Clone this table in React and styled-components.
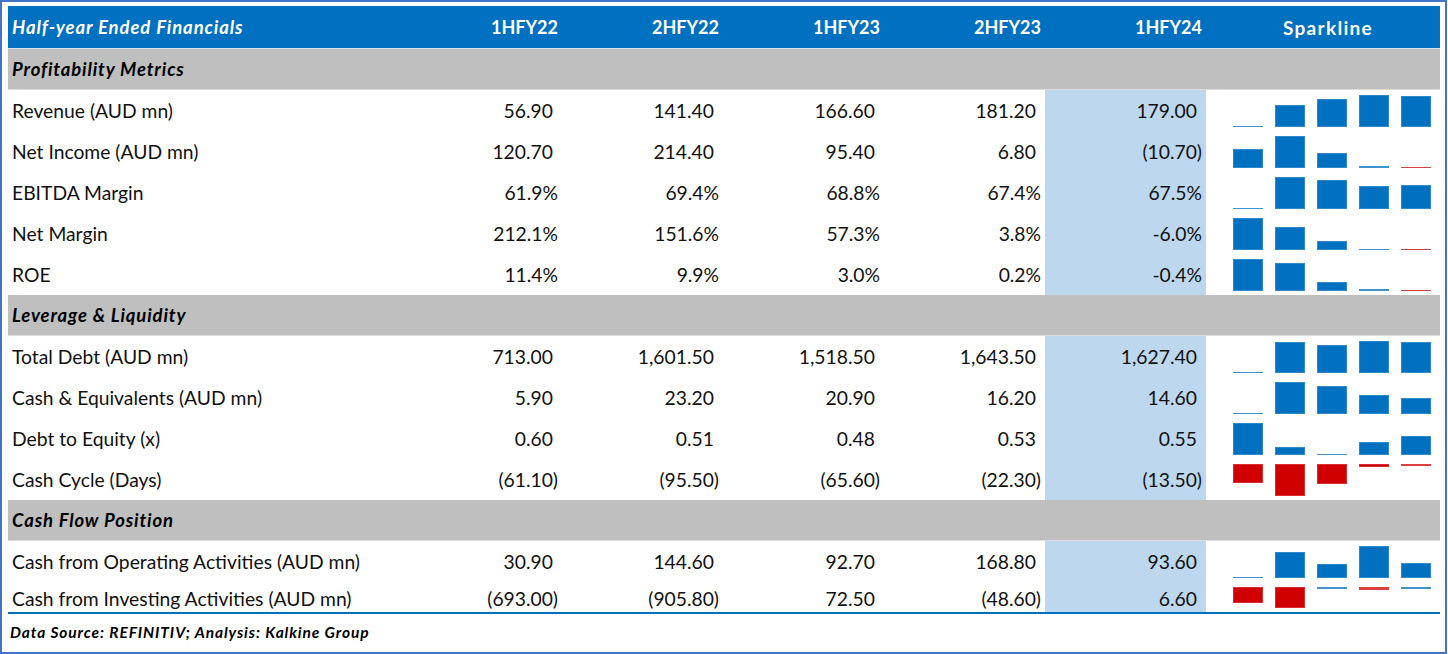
import React from 'react';
import styled, { createGlobalStyle } from 'styled-components';

const GlobalStyle = createGlobalStyle`
  html, body {
    margin: 0;
    padding: 0;
    background: #fff;
  }
  body {
    font-family: Lato, "Open Sans", "Liberation Sans", sans-serif;
    color: #111;
  }
`;

const columns = ['1HFY22', '2HFY22', '1HFY23', '2HFY23', '1HFY24'];

const sections = [
  {
    title: 'Profitability Metrics',
    rows: [
      { label: 'Revenue (AUD mn)', shown: ['56.90', '141.40', '166.60', '181.20', '179.00'], values: [56.9, 141.4, 166.6, 181.2, 179.0] },
      { label: 'Net Income (AUD mn)', shown: ['120.70', '214.40', '95.40', '6.80', '(10.70)'], values: [120.7, 214.4, 95.4, 6.8, -10.7] },
      { label: 'EBITDA Margin', shown: ['61.9%', '69.4%', '68.8%', '67.4%', '67.5%'], values: [61.9, 69.4, 68.8, 67.4, 67.5] },
      { label: 'Net Margin', shown: ['212.1%', '151.6%', '57.3%', '3.8%', '-6.0%'], values: [212.1, 151.6, 57.3, 3.8, -6.0] },
      { label: 'ROE', shown: ['11.4%', '9.9%', '3.0%', '0.2%', '-0.4%'], values: [11.4, 9.9, 3.0, 0.2, -0.4] },
    ],
  },
  {
    title: 'Leverage & Liquidity',
    rows: [
      { label: 'Total Debt (AUD mn)', shown: ['713.00', '1,601.50', '1,518.50', '1,643.50', '1,627.40'], values: [713, 1601.5, 1518.5, 1643.5, 1627.4] },
      { label: 'Cash & Equivalents (AUD mn)', shown: ['5.90', '23.20', '20.90', '16.20', '14.60'], values: [5.9, 23.2, 20.9, 16.2, 14.6] },
      { label: 'Debt to Equity (x)', shown: ['0.60', '0.51', '0.48', '0.53', '0.55'], values: [0.6, 0.51, 0.48, 0.53, 0.55] },
      { label: 'Cash Cycle (Days)', shown: ['(61.10)', '(95.50)', '(65.60)', '(22.30)', '(13.50)'], values: [-61.1, -95.5, -65.6, -22.3, -13.5], down: true },
    ],
  },
  {
    title: 'Cash Flow Position',
    rows: [
      { label: 'Cash from Operating Activities (AUD mn)', shown: ['30.90', '144.60', '92.70', '168.80', '93.60'], values: [30.9, 144.6, 92.7, 168.8, 93.6] },
      { label: 'Cash from Investing Activities (AUD mn)', shown: ['(693.00)', '(905.80)', '72.50', '(48.60)', '6.60'], values: [-693, -905.8, 72.5, -48.6, 6.6], down: true, short: true },
    ],
  },
];

// accounting format: positives keep room for the closing paren
const needsPad = (v) => !v.endsWith('%') && !v.endsWith(')');

const Sparkline = ({ values, down, short }) => {
  const area = short ? 21 : 32;
  const min = Math.min(...values);
  const max = Math.max(...values);
  return (
    <Spark $down={down}>
      {values.map((v, i) => {
        const ratio = down ? (max - v) / (max - min) : (v - min) / (max - min);
        const h = Math.max(1.5, ratio * area);
        return <Bar key={i} $neg={v < 0} $thin={h < 3} style={{ height: h }} />;
      })}
    </Spark>
  );
};

const App = () => {
  return (
    <Frame>
      <GlobalStyle />
      <Table>
        <HeaderRow>
          <HeadCell $left>Half-year Ended Financials</HeadCell>
          {columns.map((c) => (
            <HeadCell key={c}>{c}</HeadCell>
          ))}
          <HeadCell $center>Sparkline</HeadCell>
        </HeaderRow>
        {sections.map((s) => (
          <React.Fragment key={s.title}>
            <SectionRow>{s.title}</SectionRow>
            {s.rows.map((r) => (
              <DataRow key={r.label} $short={r.short}>
                <LabelCell>{r.label}</LabelCell>
                {r.shown.map((v, i) => (
                  <NumCell key={i} $hl={i === 4}>
                    {v}
                    {needsPad(v) && <Ghost>)</Ghost>}
                  </NumCell>
                ))}
                <Sparkline values={r.values} down={r.down} short={r.short} />
              </DataRow>
            ))}
          </React.Fragment>
        ))}
      </Table>
      <Footer>Data Source: REFINITIV; Analysis: Kalkine Group</Footer>
    </Frame>
  );
};

const Frame = styled.div`
  box-sizing: border-box;
  width: 1447px;
  height: 654px;
  border: 2px solid #4472c4;
  padding: 4px 5px 0 6px;
`;

const Table = styled.div`
  width: 1432px;
  border-bottom: 2px solid #0070c0;
`;

const gridCols = '393px repeat(5, 161px) 234px';

const HeaderRow = styled.div`
  display: grid;
  grid-template-columns: ${gridCols};
  height: 42px;
  background: #0070c0;
  color: #fff;
  font-weight: 700;
  font-size: 18px;
  border-bottom: 1px solid #d6e4f0;
`;

const HeadCell = styled.div`
  display: flex;
  align-items: center;
  justify-content: ${(p) => (p.$left ? 'flex-start' : p.$center ? 'center' : 'flex-end')};
  padding: ${(p) => (p.$left ? '0 0 0 4px' : p.$center ? '0 0 0 10px' : '0 4px 0 0')};
  font-style: ${(p) => (p.$left ? 'italic' : 'normal')};
  font-size: ${(p) => (p.$left ? '18.5px' : p.$center ? '19px' : '18px')};
  letter-spacing: ${(p) => (p.$left ? '0.9px' : p.$center ? '1.3px' : '0')};
`;

const SectionRow = styled.div`
  box-sizing: border-box;
  height: 41px;
  display: flex;
  align-items: center;
  padding-left: 4px;
  background: #bfbfbf;
  border-bottom: 1px solid #dcdcdc;
  font-size: 18.5px;
  font-weight: 700;
  font-style: italic;
  letter-spacing: 0.85px;
  color: #000;
`;

const DataRow = styled.div`
  display: grid;
  grid-template-columns: ${gridCols};
  height: ${(p) => (p.$short ? '30px' : '41px')};
  font-size: 19.3px;
  color: #111;
  & > div:not(:last-child) {
    padding-top: ${(p) => (p.$short ? '3px' : '0')};
  }
`;

const LabelCell = styled.div`
  display: flex;
  align-items: center;
  padding-left: 4px;
  white-space: nowrap;
`;

const NumCell = styled.div`
  display: flex;
  align-items: center;
  justify-content: flex-end;
  padding-right: 4px;
  white-space: nowrap;
  background: ${(p) => (p.$hl ? '#bdd7ee' : 'transparent')};
`;

const Ghost = styled.span`
  visibility: hidden;
`;

const Spark = styled.div`
  display: flex;
  gap: 12px;
  padding: 0 8px 0 27px;
  align-items: ${(p) => (p.$down ? 'flex-start' : 'flex-end')};
  padding-top: ${(p) => (p.$down ? '5px' : '0')};
  padding-bottom: ${(p) => (p.$down ? '0' : '4px')};
  box-sizing: border-box;
`;

const Bar = styled.div`
  width: 30px;
  flex: none;
  background: ${(p) => (p.$neg ? '#d00000' : '#0070c0')};
  opacity: ${(p) => (p.$thin ? 0.75 : 1)};
  box-shadow: ${(p) => (p.$thin ? 'none' : 'inset 0 0 0 1px rgba(255,255,255,0.18)')};
`;

const Footer = styled.div`
  padding: 9px 0 0 2px;
  font-size: 15.5px;
  font-weight: 700;
  font-style: italic;
  letter-spacing: 0.9px;
  color: #000;
`;

export default App;
